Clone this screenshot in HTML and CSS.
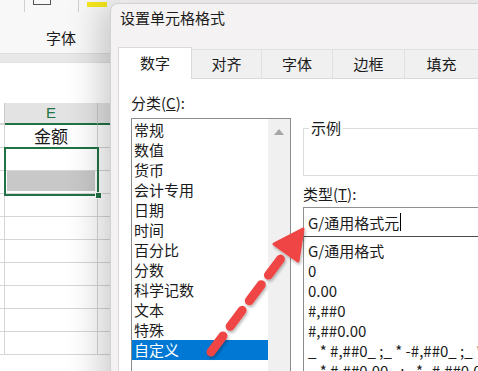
FILE: index.html
```html
<!DOCTYPE html>
<html lang="zh-CN">
<head>
    <meta charset="UTF-8">
    <meta name="viewport" content="width=device-width, initial-scale=1.0">
    <title>设置单元格格式</title>
    <link rel="stylesheet" href="styles.css">
</head>
<body>
    <div class="app">
        <div class="sheet">
            <div class="ribbon">
                <div class="ribbon-top">
                    <span class="sep"></span>
                    <span class="icon-box"></span>
                    <span class="sep"></span>
                    <span class="highlight"></span>
                </div>
                <div class="group-label">字体</div>
            </div>
            <div class="ribbon-edge"></div>
            <div class="formula-bar"></div>
            <div class="grid">
                <div class="row header">
                    <div class="cell c0"></div>
                    <div class="cell ce">E</div>
                    <div class="cell cf"></div>
                </div>
                <div class="row">
                    <div class="cell c0"></div>
                    <div class="cell ce title-cell">金额</div>
                    <div class="cell cf"></div>
                </div>
                <div class="row">
                    <div class="cell c0"></div>
                    <div class="cell ce"></div>
                    <div class="cell cf"></div>
                </div>
                <div class="row">
                    <div class="cell c0"></div>
                    <div class="cell ce"><span class="fill"></span></div>
                    <div class="cell cf"></div>
                </div>
                <div class="row"><div class="cell c0"></div><div class="cell ce"></div><div class="cell cf"></div></div>
                <div class="row"><div class="cell c0"></div><div class="cell ce"></div><div class="cell cf"></div></div>
                <div class="row"><div class="cell c0"></div><div class="cell ce"></div><div class="cell cf"></div></div>
                <div class="row"><div class="cell c0"></div><div class="cell ce"></div><div class="cell cf"></div></div>
                <div class="row"><div class="cell c0"></div><div class="cell ce"></div><div class="cell cf"></div></div>
                <div class="row"><div class="cell c0"></div><div class="cell ce"></div><div class="cell cf"></div></div>
                <div class="row"><div class="cell c0"></div><div class="cell ce"></div><div class="cell cf"></div></div>

                <div class="selection"><span class="handle"></span></div>
            </div>
        </div>

        <div class="dialog">
            <div class="dialog-title">设置单元格格式</div>

            <div class="tabs">
                <div class="tab active">数字</div>
                <div class="tab">对齐</div>
                <div class="tab">字体</div>
                <div class="tab">边框</div>
                <div class="tab">填充</div>
            </div>

            <div class="panel">
                <div class="col-left">
                    <div class="label">分类(<u>C</u>):</div>
                    <div class="listbox">
                        <ul class="items">
                            <li>常规</li>
                            <li>数值</li>
                            <li>货币</li>
                            <li>会计专用</li>
                            <li>日期</li>
                            <li>时间</li>
                            <li>百分比</li>
                            <li>分数</li>
                            <li>科学记数</li>
                            <li>文本</li>
                            <li>特殊</li>
                            <li class="selected">自定义</li>
                        </ul>
                        <div class="scrollbar"><span class="up"></span></div>
                    </div>
                </div>

                <div class="col-right">
                    <fieldset class="sample">
                        <legend>示例</legend>
                    </fieldset>
                    <div class="label type-label">类型(<u>T</u>):</div>
                    <div class="input">G/通用格式元<span class="caret"></span></div>
                    <ul class="type-list">
                        <li>G/通用格式</li>
                        <li>0</li>
                        <li>0.00</li>
                        <li>#,##0</li>
                        <li>#,##0.00</li>
                        <li>_ * #,##0_ ;_ * -#,##0_ ;_ * "-"_ ;_ @_</li>
                        <li>_ * #,##0.00_ ;_ * -#,##0.00_ ;_ * "-"??_ ;_ @_</li>
                    </ul>
                </div>
            </div>
        </div>

        <svg class="arrow" width="478" height="371" viewBox="0 0 478 371">
            <defs>
                <filter id="shadow" x="-20%" y="-20%" width="140%" height="140%">
                    <feDropShadow dx="1" dy="2" stdDeviation="1.5" flood-color="#000" flood-opacity="0.3"/>
                </filter>
            </defs>
            <g filter="url(#shadow)" fill="#ef4444" stroke="#ef4444">
                <line x1="211" y1="352" x2="285" y2="253" stroke-width="9" stroke-linecap="round" stroke-dasharray="20 12"/>
                <polygon points="303,229 298,261 274,244" stroke-width="3" stroke-linejoin="round"/>
            </g>
        </svg>
    </div>
</body>
</html>
```

FILE: styles.css
```css
* {
    box-sizing: border-box;
}

body {
    margin: 0;
    font-family: "Noto Sans CJK SC", "Noto Sans", sans-serif;
    color: #1b1b1b;
    background: #ffffff;
}

.app {
    position: relative;
    width: 478px;
    height: 371px;
    overflow: hidden;
}

/* excel behind the dialog */
.sheet {
    width: 120px;
    height: 371px;
    background: #ffffff;
}

.ribbon {
    height: 53px;
    background: #f8f8f8;
}

.ribbon-top {
    display: flex;
    align-items: flex-start;
    height: 30px;
}

.sep {
    width: 1px;
    height: 12px;
    background: #d0d0d0;
}

.sep:first-child {
    margin-left: 24px;
}

.icon-box {
    width: 18px;
    height: 5px;
    margin: 0 27px 0 8px;
    border: 1px solid #555;
    border-top: none;
}

.highlight {
    width: 20px;
    height: 5px;
    margin: 2px 0 0 8px;
    background: #f7e81c;
}

.group-label {
    padding-left: 46px;
    font-size: 15px;
    line-height: 18px;
    margin-top: -1px;
}

.ribbon-edge {
    height: 9px;
    background: #e8e8e8;
    border-top: 1px solid #dedede;
}

.formula-bar {
    height: 41px;
    background: #ffffff;
    border-top: 1px solid #e0e0e0;
}

.grid {
    position: relative;
}

.row {
    display: flex;
    height: 23px;
}

.cell {
    border-right: 1px solid #d6d6d6;
    border-bottom: 1px solid #d6d6d6;
}

.c0 {
    width: 5px;
}

.ce {
    position: relative;
    width: 93px;
    font-size: 16px;
    line-height: 22px;
    text-align: center;
}

.title-cell {
    font-size: 17px;
    line-height: 21px;
}

.cf {
    width: 13px;
}

.header {
    height: 22px;
}

.header .cell {
    background: #e3e3e3;
    border-bottom: 2px solid #217346;
    border-right-color: #c8c8c8;
}

.header .c0 {
    background: #ffffff;
    border-bottom-color: #d6d6d6;
}

.header .ce {
    color: #217346;
    line-height: 20px;
    font-size: 15px;
    font-family: "Liberation Sans", sans-serif;
}

.fill {
    display: block;
    height: 20px;
    margin: 0 2px;
    background: #c8c8c8;
}

/* selected range E2:E3 */
.selection {
    position: absolute;
    left: 4px;
    top: 44px;
    width: 95px;
    height: 49px;
    border: 2px solid #217346;
}

.handle {
    position: absolute;
    right: -5px;
    bottom: -5px;
    width: 7px;
    height: 7px;
    background: #217346;
    border: 1px solid #ffffff;
}

/* format cells dialog */
.dialog {
    position: absolute;
    left: 110px;
    top: 3px;
    width: 400px;
    height: 400px;
    background: #f4f2f2;
    border: 1px solid #d2d2d2;
    border-radius: 8px;
    box-shadow: -8px 0 36px rgba(0, 0, 0, 0.22);
}

.dialog-title {
    height: 43px;
    padding: 2px 0 0 9px;
    font-size: 15px;
    line-height: 24px;
}

.tabs {
    display: flex;
    align-items: flex-end;
    height: 31px;
    margin-left: 7px;
}

.tab {
    height: 29px;
    font-size: 15px;
    line-height: 27px;
    text-align: center;
    background: #f0f0f0;
    border: 1px solid #e0e0e0;
    border-bottom: none;
    border-left: none;
}

.tab:nth-child(1) { width: 74px; }
.tab:nth-child(2) { width: 70px; }
.tab:nth-child(3) { width: 71px; }
.tab:nth-child(4) { width: 72px; }
.tab:nth-child(5) { width: 74px; }

.tab.active {
    position: relative;
    height: 32px;
    margin-bottom: -1px;
    line-height: 30px;
    background: #ffffff;
    border: 1px solid #dadada;
    border-bottom: none;
    z-index: 1;
}

.panel {
    display: flex;
    gap: 12px;
    height: 300px;
    margin-left: 7px;
    padding: 14px 0 0 12px;
    background: #ffffff;
    border: 1px solid #dadada;
}

.label {
    font-size: 15px;
    line-height: 20px;
}

.col-left {
    width: 160px;
}

.listbox {
    display: flex;
    height: 260px;
    margin-top: 5px;
    border: 1px solid #8c8c8c;
}

.items {
    flex: 1;
    margin: 0;
    padding: 0;
    list-style: none;
}

.items li,
.type-list li {
    height: 20px;
    font-size: 15px;
    line-height: 20px;
    white-space: nowrap;
}

.items li {
    padding-left: 2px;
}

.items li:first-child {
    margin-top: 1px;
}

.items li.selected {
    background: #0078d4;
    color: #ffffff;
}

.scrollbar {
    width: 22px;
    background: #f0f0f0;
}

.up {
    display: block;
    width: 0;
    height: 0;
    margin: 10px auto 0;
    border-left: 5px solid transparent;
    border-right: 5px solid transparent;
    border-bottom: 6px solid #a6a6a6;
}

.col-right {
    flex: 1;
    min-width: 0;
}

.sample {
    height: 58px;
    margin: 25px 0 0 0;
    padding: 0;
    border: 1px solid #dcdcdc;
}

.sample legend {
    margin-left: 5px;
    padding: 0 2px;
    font-size: 15px;
    line-height: 20px;
}

.type-label {
    margin-top: 8px;
}

.input {
    display: flex;
    align-items: center;
    height: 30px;
    margin-top: 3px;
    padding-left: 4px;
    font-size: 15px;
    border: 1px solid #8f8f8f;
    border-bottom-color: #4a4a4a;
}

.caret {
    width: 1px;
    height: 18px;
    margin-left: 1px;
    background: #000;
}

.type-list {
    height: 200px;
    margin: 0;
    padding: 4px 0 0 4px;
    list-style: none;
    overflow: hidden;
    border: 1px solid #8c8c8c;
    border-top: none;
}

.arrow {
    position: absolute;
    left: 0;
    top: 0;
    pointer-events: none;
}
```
